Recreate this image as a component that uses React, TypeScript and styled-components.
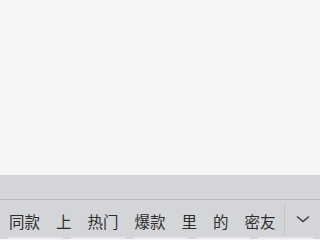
import styled, { createGlobalStyle } from "styled-components";

const Global = createGlobalStyle`
  html, body {
    margin: 0;
    padding: 0;
    background: #f5f5f5;
    font-family: "Noto Sans CJK SC", "Noto Sans", sans-serif;
  }
`;

const Screen = styled.div`
  width: 320px;
  height: 239px;
  display: flex;
  flex-direction: column;
  overflow: hidden;
`;

const Content = styled.div`
  height: 175px;
  background: #f5f5f5;
`;

const Toolbar = styled.div`
  height: 24px;
  background: #d4d5d9;
  border-bottom: 1px solid #b9babe;
`;

const CandidateBar = styled.div`
  height: 37px;
  display: flex;
  align-items: center;
  background: #d4d5d9;
`;

const Candidates = styled.div`
  flex: 1;
  display: flex;
  align-items: center;
  padding-left: 9px;
  gap: 16px;
  height: 100%;
`;

const Word = styled.span`
  font-size: 15.5px;
  line-height: 20px;
  color: #2e2e2e;
  padding-top: 4px;
`;

const Divider = styled.div`
  width: 1px;
  height: 32px;
  background: #c2c3c7;
`;

const Expand = styled.button`
  width: 35px;
  height: 100%;
  border: none;
  background: transparent;
  padding: 0;
  display: flex;
  align-items: center;
  justify-content: center;
  color: #3a3a3a;
`;

const Keys = styled.div`
  height: 2px;
  display: flex;
  gap: 8px;
  padding: 0 7px 0 8px;
  background: #d4d5d9;
`;

const KeyTop = styled.div`
  flex: 1;
  background: #e6e7ea;
`;

const words = ["同款", "上", "热门", "爆款", "里", "的", "密友"];

export default function App() {
  return (
    <>
      <Global />
      <Screen>
        <Content />
        <Toolbar />
        <CandidateBar>
          <Candidates>
            {words.map((w) => (
              <Word key={w}>{w}</Word>
            ))}
          </Candidates>
          <Divider />
          <Expand>
            <svg width="14" height="8" viewBox="0 0 14 8" fill="none">
              <path d="M1 1.5 7 6.5 13 1.5" stroke="currentColor" strokeWidth="1.4" />
            </svg>
          </Expand>
        </CandidateBar>
        <Keys>
          {[0, 1, 2, 3, 4].map((i) => (
            <KeyTop key={i} />
          ))}
        </Keys>
      </Screen>
    </>
  );
}
